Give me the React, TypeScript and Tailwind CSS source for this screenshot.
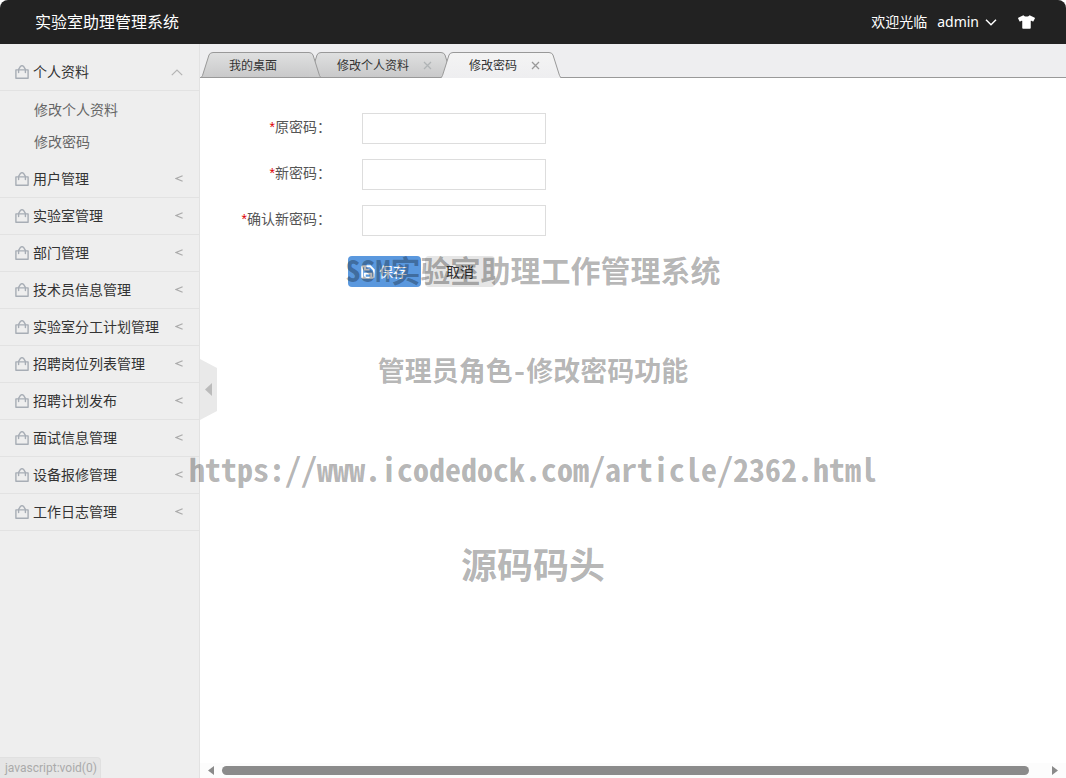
import React, { useState } from 'react';
import { FaTshirt } from 'react-icons/fa';

interface MenuGroup {
  title: string;
  children?: string[];
}

interface Tab {
  title: string;
  closable: boolean;
}

const MENU: MenuGroup[] = [
  { title: '个人资料', children: ['修改个人资料', '修改密码'] },
  { title: '用户管理' },
  { title: '实验室管理' },
  { title: '部门管理' },
  { title: '技术员信息管理' },
  { title: '实验室分工计划管理' },
  { title: '招聘岗位列表管理' },
  { title: '招聘计划发布' },
  { title: '面试信息管理' },
  { title: '设备报修管理' },
  { title: '工作日志管理' },
];

const TABS: Tab[] = [
  { title: '我的桌面', closable: false },
  { title: '修改个人资料', closable: true },
  { title: '修改密码', closable: true },
];

const FIELDS = [
  { id: 'old-password', label: '原密码' },
  { id: 'new-password', label: '新密码' },
  { id: 'confirm-password', label: '确认新密码' },
];

const BagIcon = () => (
  <svg className="h-[15px] w-[15px] shrink-0" viewBox="0 0 15 15" fill="none" stroke="#a7adb5" strokeWidth="1.4">
    <path d="M.9 4.9h12.2v8.4H.9z" strokeLinejoin="round" />
    <path d="M3.6 7.6V4.4L5.6 1.2Q7 .2 8.400 1.2L10.400 4.4V7.6" strokeLinejoin="round" strokeLinecap="round" />
  </svg>
);

const SaveIcon = () => (
  <svg className="h-[14px] w-[14px]" viewBox="0 0 14 14" fill="none" stroke="#fff" strokeWidth="1.9">
    <path d="M1.2 2.4Q1.2 1.2 2.4 1.2H9.2L12.8 4.8V11.6Q12.8 12.8 11.6 12.8H2.4Q1.2 12.8 1.2 11.6z" />
    <path d="M4 1.2v3.4h4.6M3.8 12.8V8.6h6.4v4.2" />
  </svg>
);

/** Slanted side of a tab; the right side is the mirrored left one */
const TabEdge: React.FC<{ active: boolean; right?: boolean }> = ({ active, right }) => {
  const gradientId = `edge-${active ? 'on' : 'off'}-${right ? 'r' : 'l'}`;
  return (
    <svg className={`h-[26px] w-3 shrink-0 ${right ? '-scale-x-100' : ''}`} viewBox="0 0 12 26">
      <defs>
        <linearGradient id={gradientId} x1="0" y1="0" x2="0" y2="1">
          <stop offset="0" stopColor={active ? '#f4f4f4' : '#dfe0e0'} />
          <stop offset="1" stopColor={active ? '#eeeef0' : '#c9c9ca'} />
        </linearGradient>
      </defs>
      <path d="M0 26L1 25L8 3Q9 .5 12 .5V26z" fill={`url(#${gradientId})`} />
      <path d="M0 25.5Q1 25 1.5 23.5L8 3Q9 .5 12 .5" fill="none" stroke="#999" />
      {!active && <path d="M0 25.5H12" stroke="#999" />}
    </svg>
  );
};

const Header = () => (
  <header className="flex h-11 items-center justify-between rounded-t-lg bg-[#222] pr-[31px] pl-[35px] text-white">
    <h1 className="text-base">实验室助理管理系统</h1>
    <div className="flex items-center text-sm">
      <span>欢迎光临</span>
      <button type="button" className="ml-[10px] flex items-center gap-[6px]">
        admin
        <svg className="h-[7px] w-3" viewBox="0 0 12 7" fill="none" stroke="#fff" strokeWidth="1.5">
          <path d="M1 .8L6 5.8L11 .8" />
        </svg>
      </button>
      <button type="button" aria-label="换肤" className="ml-[21px]">
        <FaTshirt className="h-4 w-[17px]" />
      </button>
    </div>
  </header>
);

const Sidebar = () => {
  const [openGroup, setOpenGroup] = useState<string>('个人资料');

  return (
    <aside className="w-[200px] shrink-0 border-r border-[#e2e2e2] bg-[#eee] pt-[10px] text-sm">
      {MENU.map((group) => {
        const isOpen = openGroup === group.title;
        return (
          <div key={group.title}>
            <button
              type="button"
              onClick={() => setOpenGroup(isOpen ? '' : group.title)}
              className="flex h-[37px] w-full items-center border-b border-[#e2e2e2] pr-4 pl-[15px] text-[#333]"
            >
              <BagIcon />
              <span className="ml-[3px]">{group.title}</span>
              {isOpen ? (
                <svg className="ml-auto h-[7px] w-3" viewBox="0 0 12 7" fill="none" stroke="#b4b4b4" strokeWidth="1.2">
                  <path d="M.8 6.2L6 1L11.2 6.2" />
                </svg>
              ) : (
                <svg className="mb-px ml-auto h-[7px] w-2" viewBox="0 0 8 7" fill="none" stroke="#aaa" strokeWidth="1.2">
                  <path d="M7.6 .7L1 3.5L7.6 6.3" />
                </svg>
              )}
            </button>
            {isOpen && group.children && (
              <ul className="py-[3px]">
                {group.children.map((item) => (
                  <li key={item}>
                    <a href="#" className="block pl-[34px] leading-8 text-[#666]">
                      {item}
                    </a>
                  </li>
                ))}
              </ul>
            )}
          </div>
        );
      })}
    </aside>
  );
};

const TabBar = () => {
  const [current, setCurrent] = useState(2);

  return (
    <nav className="flex h-[34px] items-end border-b border-[#999] bg-[#eeeef0] pl-px text-xs text-[#333]">
      {TABS.map((tab, index) => {
        const active = index === current;
        return (
          <div
            key={tab.title}
            className={`relative -mr-3 -mb-px flex h-[26px] ${active ? 'z-20' : index === 0 ? 'z-10' : 'z-0'}`}
          >
            <TabEdge active={active} />
            <div
              className={`flex items-center border-t border-t-[#999] pr-[9px] pl-4 ${
                active
                  ? 'bg-linear-to-b from-[#f4f4f4] to-[#eeeef0]'
                  : 'border-b border-b-[#999] bg-linear-to-b from-[#dfe0e0] to-[#c9c9ca] pt-px'
              }`}
            >
              <button type="button" onClick={() => setCurrent(index)}>
                {tab.title}
              </button>
              {tab.closable ? (
                <button type="button" aria-label="关闭" className="ml-[14px]">
                  <svg
                    className="h-[9px] w-[9px]"
                    viewBox="0 0 9 9"
                    stroke={active ? '#999' : '#b0b4b6'}
                    strokeWidth="1.3"
                  >
                    <path d="M1 1L8 8M8 1L1 8" />
                  </svg>
                </button>
              ) : (
                <span className="w-[23px]" />
              )}
            </div>
            <TabEdge active={active} right />
          </div>
        );
      })}
    </nav>
  );
};

const PasswordForm = () => (
  <form className="flex-1 pt-[35px] text-sm" onSubmit={(event) => event.preventDefault()}>
    <div className="flex flex-col gap-[15px]">
      {FIELDS.map((field) => (
        <div key={field.id} className="flex">
          <label htmlFor={field.id} className="w-[131px] text-right leading-7 text-[#555]">
            <span className="font-['Liberation_Sans',sans-serif] text-[#d00]">*</span>
            {field.label}：
          </label>
          <input
            id={field.id}
            type="password"
            className="ml-[31px] h-[31px] w-[184px] border border-[#ddd] bg-white px-1 outline-none"
          />
        </div>
      ))}
    </div>
    <div className="mt-5 flex gap-1 pl-[148px]">
      <button
        type="submit"
        className="flex h-[31px] items-center gap-1 rounded bg-[#5a98de] pr-[14px] pl-[13px] text-white"
      >
        <SaveIcon />
        保存
      </button>
      <button type="button" className="h-[31px] rounded bg-[#e6e6e6] px-[21px] text-[#333]">
        取消
      </button>
    </div>
  </form>
);

/** Horizontal scroll bar at the foot of the content frame */
const ScrollBar = () => (
  <div className="flex h-[15px] items-center bg-[#fcfcfc] px-2">
    <svg className="h-[9px] w-[6px]" viewBox="0 0 6 9">
      <path d="M6 0V9L0 4.5z" fill="#8a8a8a" />
    </svg>
    <div className="mr-[23px] ml-2 h-[9px] flex-1 rounded-full bg-[#8b8b8b]" />
    <svg className="h-[9px] w-[6px]" viewBox="0 0 6 9">
      <path d="M0 0V9L6 4.5z" fill="#8a8a8a" />
    </svg>
  </div>
);

const Watermark = () => (
  <div className="pointer-events-none absolute inset-x-0 top-[249px] z-40 flex flex-col items-center font-['Noto_Sans_Mono_CJK_SC','Noto_Sans_CJK_SC',monospace] font-bold whitespace-nowrap text-black/30">
    <p className="text-[30px] leading-10">SSM实验室助理工作管理系统</p>
    <p className="mt-[61px] text-[27px] leading-10">管理员角色-修改密码功能</p>
    <p className="mt-[58px] text-[32px] leading-10">https://www.icodedock.com/article/2362.html</p>
    <p className="mt-[55px] text-4xl leading-10">源码码头</p>
  </div>
);

export default function App() {
  return (
    <div className="relative flex min-h-screen flex-col bg-white font-['Noto_Sans','Noto_Sans_CJK_SC',sans-serif]">
      <Header />
      <div className="flex flex-1">
        <Sidebar />
        <main className="relative flex min-w-0 flex-1 flex-col">
          <TabBar />
          <PasswordForm />
          <ScrollBar />
          <button type="button" aria-label="收起菜单" className="absolute top-[315px] left-0">
            <svg className="h-[61px] w-[17px]" viewBox="0 0 17 61">
              <path d="M0 0L17 9V52L0 61z" fill="#e9e9e9" />
              <path d="M12 24V37L5 30.500z" fill="#bbb" />
            </svg>
          </button>
        </main>
      </div>
      <Watermark />
      <div className="absolute bottom-0 left-0 rounded-tr border-t border-r border-[#e0e0e0] bg-[#e5e5e5] pr-[3px] pl-[5px] font-[Roboto,sans-serif] text-xs leading-5 text-[#aaa]">
        javascript:void(0)
      </div>
    </div>
  );
}
